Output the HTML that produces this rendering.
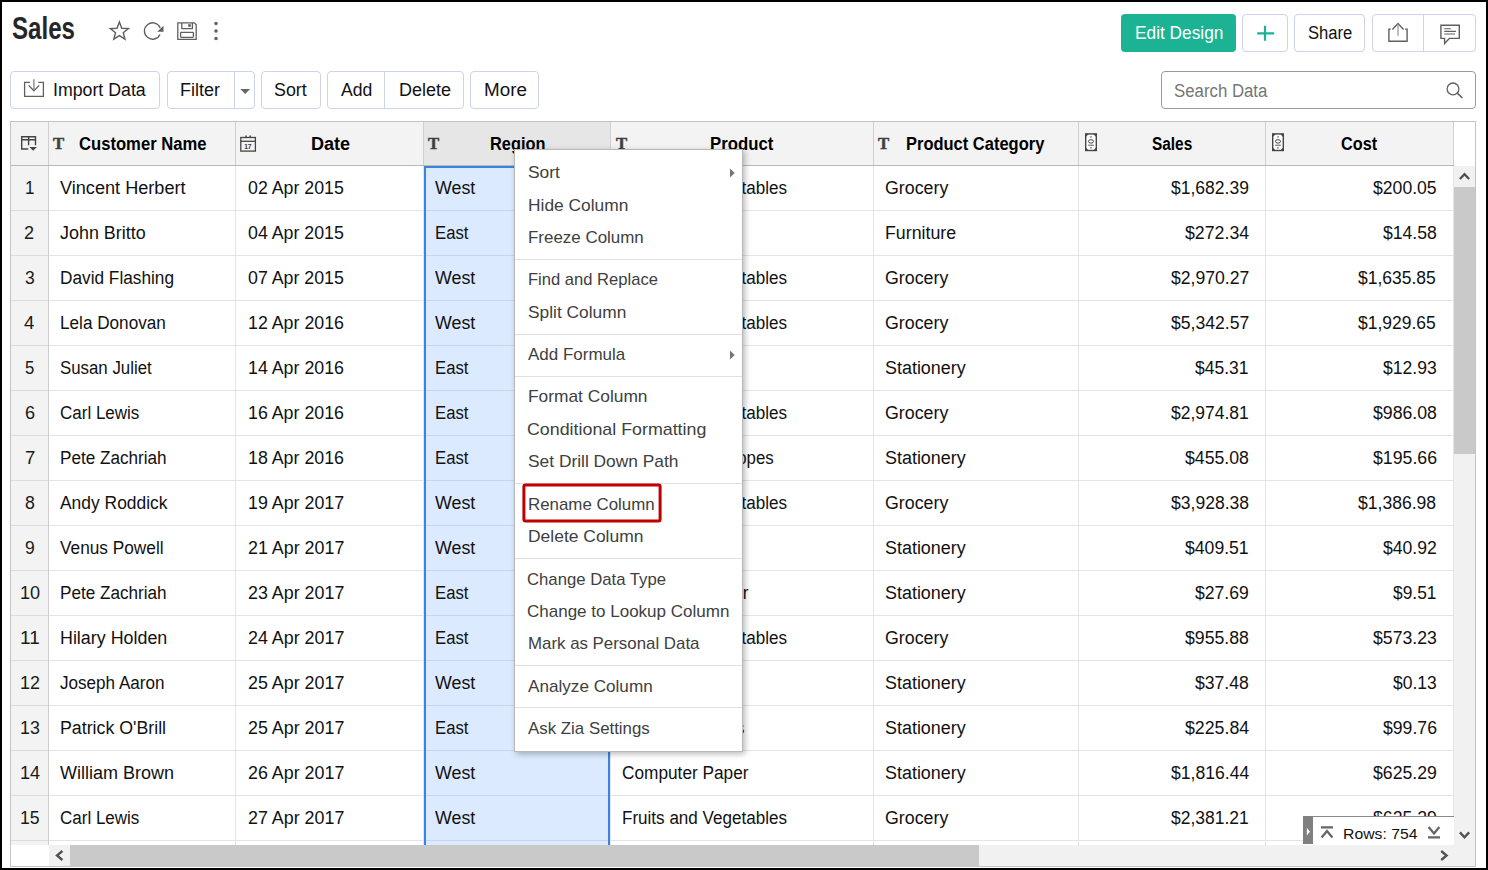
<!DOCTYPE html>
<html lang="en"><head><meta charset="utf-8"><title>Sales</title>
<style>
html,body{margin:0;padding:0;}
body{width:1488px;height:870px;position:relative;overflow:hidden;background:#fff;font-family:"Liberation Sans", sans-serif;}
body div,body svg,body span.t{position:absolute;box-sizing:border-box;}
span.t{white-space:pre;display:block;transform-origin:0 50%;}
svg{overflow:visible;}
.btn{border:1px solid #ccd3ea;border-radius:4px;background:#fff;}
</style></head><body>
<span class="t" style="left:11.87px;top:9.83px;font-size:30.5px;line-height:37px;color:#262626;transform:scaleX(0.7898);font-weight:700;">Sales</span>
<svg style="left:104px;top:14px" width="32" height="32" viewBox="0 0 32 32"><polygon points="15.40,8.00 17.78,14.22 24.44,14.56 19.25,18.75 20.98,25.19 15.40,21.55 9.82,25.19 11.55,18.75 6.36,14.56 13.02,14.22" fill="none" stroke="#5f5f5f" stroke-width="1.4" stroke-linejoin="miter"/></svg>
<svg style="left:138px;top:14px" width="32" height="34" viewBox="0 0 32 34"><path d="M22.20 13.93 A8.2 8.2 0 1 0 22.03 20.47" fill="none" stroke="#5f5f5f" stroke-width="1.3"/><polygon points="25.5,11.8 25.5,17.7 19.19999999999999,17.7" fill="#5f5f5f"/></svg>
<svg style="left:174px;top:18px" width="26" height="26" viewBox="0 0 26 26"><g fill="none" stroke="#5f5f5f" stroke-width="1.3" stroke-linejoin="round"><path d="M3.8 4.9 H20.4 L22.2 6.7 V21.4 H3.8 Z"/><path d="M7.8 4.9 V10.6 H18.4 V4.9"/><rect x="6.6" y="14.4" width="12.8" height="4.9" rx="0.8"/></g><rect x="14.2" y="6.2" width="2.6" height="2.6" fill="#5f5f5f"/></svg>
<svg style="left:210px;top:18px" width="12" height="26" viewBox="0 0 12 26"><g fill="#5f5f5f"><circle cx="6" cy="5.4" r="1.75"/><circle cx="6" cy="13.1" r="1.75"/><circle cx="6" cy="20.4" r="1.75"/></g></svg>
<div style="left:1121px;top:14px;width:115px;height:38px;background:#1bb394;border-radius:4px;"></div>
<span class="t" style="left:1134.91px;top:21.76px;font-size:18px;line-height:22px;color:#fff;transform:scaleX(0.9605);">Edit Design</span>
<div class="btn" style="left:1242px;top:14px;width:46px;height:38px;"></div>
<svg style="left:1242px;top:14px" width="46" height="38" viewBox="0 0 46 38"><path d="M23 11.8V26.8M15.2 19.4H32.2" stroke="#1bb394" stroke-width="2.2" fill="none"/></svg>
<div class="btn" style="left:1294px;top:14px;width:71px;height:38px;"></div>
<span class="t" style="left:1307.81px;top:21.76px;font-size:18px;line-height:22px;color:#111;transform:scaleX(0.9222);">Share</span>
<div class="btn" style="left:1372px;top:14px;width:104px;height:38px;"></div>
<div style="left:1423px;top:15px;width:1px;height:36px;background:#ccd3ea;"></div>
<svg style="left:1380px;top:16px" width="40" height="34" viewBox="0 0 40 34"><g fill="none" stroke="#5f5f5f" stroke-width="1.4"><path d="M10.9 13.1H8.9V25.2H27.1V13.1H25.1"/><path d="M12.4 13.5L18 7.6L23.6 13.5"/></g><path d="M18 8.5V19.8" stroke="#a9a9a9" stroke-width="1.5" fill="none"/></svg>
<svg style="left:1430px;top:16px" width="40" height="34" viewBox="0 0 40 34"><g fill="none" stroke="#5f5f5f" stroke-width="1.4" stroke-linejoin="miter"><path d="M10.9 9.2H29.3V22.4H19.3L14.6 27.4V22.4H10.9Z"/></g><g stroke="#5f5f5f" stroke-width="1.1" fill="none"><path d="M14.2 12.8H20.8M14.2 15.4H25.9M14.2 18H25"/></g></svg>
<div class="btn" style="left:10px;top:71px;width:150px;height:38px;"></div>
<svg style="left:20px;top:74px" width="30" height="30" viewBox="0 0 30 30"><g fill="none" stroke="#5f5f5f" stroke-width="1.3"><path d="M9.9 8.4H4.6V22.4H23.4V8.4H18.3"/><path d="M8.6 11.4L13.9 16.8L19.2 11.4"/></g><path d="M13.9 5.3V16" stroke="#8a8a8a" stroke-width="1.4" fill="none"/></svg>
<span class="t" style="left:53.47px;top:78.86px;font-size:18px;line-height:22px;color:#111;transform:scaleX(0.9857);">Import Data</span>
<div class="btn" style="left:167px;top:71px;width:88px;height:38px;"></div>
<div style="left:234px;top:72px;width:1px;height:36px;background:#ccd3ea;"></div>
<span class="t" style="left:180.15px;top:78.86px;font-size:18px;line-height:22px;color:#111;transform:scaleX(0.9973);">Filter</span>
<svg style="left:238px;top:84px" width="14" height="14" viewBox="0 0 14 14"><polygon points="2.3,5 12.1,5 7.2,9.9" fill="#666"/></svg>
<div class="btn" style="left:261px;top:71px;width:60px;height:38px;"></div>
<span class="t" style="left:274.26px;top:78.86px;font-size:18px;line-height:22px;color:#111;transform:scaleX(0.9903);">Sort</span>
<div class="btn" style="left:327px;top:71px;width:137px;height:38px;"></div>
<div style="left:384px;top:72px;width:1px;height:36px;background:#ccd3ea;"></div>
<span class="t" style="left:340.95px;top:78.86px;font-size:18px;line-height:22px;color:#111;transform:scaleX(0.9768);">Add</span>
<span class="t" style="left:398.85px;top:78.86px;font-size:18px;line-height:22px;color:#111;transform:scaleX(0.9996);">Delete</span>
<div class="btn" style="left:470px;top:71px;width:69px;height:38px;"></div>
<span class="t" style="left:483.59px;top:78.86px;font-size:18px;line-height:22px;color:#111;transform:scaleX(1.0463);">More</span>
<div style="left:1161px;top:71px;width:315px;height:38px;border:1px solid #9a9a9a;border-radius:4px;background:#fff;"></div>
<span class="t" style="left:1174.10px;top:79.86px;font-size:18px;line-height:22px;color:#767676;transform:scaleX(0.9331);">Search Data</span>
<svg style="left:1440px;top:78px" width="28" height="26" viewBox="0 0 28 26"><circle cx="13" cy="10.9" r="5.9" fill="none" stroke="#5f5f5f" stroke-width="1.3"/><path d="M17.3 15.2L22.4 20" stroke="#5f5f5f" stroke-width="1.6" fill="none"/></svg>
<div style="left:10px;top:121px;width:1466px;height:746px;border:1px solid #c4c4c4;background:#fff;"></div>
<div style="left:11px;top:122px;width:1443px;height:43px;background:#f3f3f3;"></div>
<div style="left:424px;top:122px;width:186px;height:43px;background:#e6e6e6;"></div>
<div style="left:11px;top:166px;width:37px;height:679px;background:#f3f3f3;"></div>
<div style="left:11px;top:210px;width:37px;height:1px;background:#dcdcdc;"></div>
<div style="left:49px;top:210px;width:1404px;height:1px;background:#e4e4e4;"></div>
<div style="left:11px;top:255px;width:37px;height:1px;background:#dcdcdc;"></div>
<div style="left:49px;top:255px;width:1404px;height:1px;background:#e4e4e4;"></div>
<div style="left:11px;top:300px;width:37px;height:1px;background:#dcdcdc;"></div>
<div style="left:49px;top:300px;width:1404px;height:1px;background:#e4e4e4;"></div>
<div style="left:11px;top:345px;width:37px;height:1px;background:#dcdcdc;"></div>
<div style="left:49px;top:345px;width:1404px;height:1px;background:#e4e4e4;"></div>
<div style="left:11px;top:390px;width:37px;height:1px;background:#dcdcdc;"></div>
<div style="left:49px;top:390px;width:1404px;height:1px;background:#e4e4e4;"></div>
<div style="left:11px;top:435px;width:37px;height:1px;background:#dcdcdc;"></div>
<div style="left:49px;top:435px;width:1404px;height:1px;background:#e4e4e4;"></div>
<div style="left:11px;top:480px;width:37px;height:1px;background:#dcdcdc;"></div>
<div style="left:49px;top:480px;width:1404px;height:1px;background:#e4e4e4;"></div>
<div style="left:11px;top:525px;width:37px;height:1px;background:#dcdcdc;"></div>
<div style="left:49px;top:525px;width:1404px;height:1px;background:#e4e4e4;"></div>
<div style="left:11px;top:570px;width:37px;height:1px;background:#dcdcdc;"></div>
<div style="left:49px;top:570px;width:1404px;height:1px;background:#e4e4e4;"></div>
<div style="left:11px;top:615px;width:37px;height:1px;background:#dcdcdc;"></div>
<div style="left:49px;top:615px;width:1404px;height:1px;background:#e4e4e4;"></div>
<div style="left:11px;top:660px;width:37px;height:1px;background:#dcdcdc;"></div>
<div style="left:49px;top:660px;width:1404px;height:1px;background:#e4e4e4;"></div>
<div style="left:11px;top:705px;width:37px;height:1px;background:#dcdcdc;"></div>
<div style="left:49px;top:705px;width:1404px;height:1px;background:#e4e4e4;"></div>
<div style="left:11px;top:750px;width:37px;height:1px;background:#dcdcdc;"></div>
<div style="left:49px;top:750px;width:1404px;height:1px;background:#e4e4e4;"></div>
<div style="left:11px;top:795px;width:37px;height:1px;background:#dcdcdc;"></div>
<div style="left:49px;top:795px;width:1404px;height:1px;background:#e4e4e4;"></div>
<div style="left:11px;top:840px;width:37px;height:1px;background:#dcdcdc;"></div>
<div style="left:49px;top:840px;width:1404px;height:1px;background:#e4e4e4;"></div>
<div style="left:235px;top:166px;width:1px;height:679px;background:#e4e4e4;"></div>
<div style="left:423px;top:166px;width:1px;height:679px;background:#e4e4e4;"></div>
<div style="left:610px;top:166px;width:1px;height:679px;background:#e4e4e4;"></div>
<div style="left:873px;top:166px;width:1px;height:679px;background:#e4e4e4;"></div>
<div style="left:1078px;top:166px;width:1px;height:679px;background:#e4e4e4;"></div>
<div style="left:1265px;top:166px;width:1px;height:679px;background:#e4e4e4;"></div>
<div style="left:1453px;top:166px;width:1px;height:679px;background:#e4e4e4;"></div>
<div style="left:48px;top:166px;width:1px;height:679px;background:#cfcfcf;"></div>
<div style="left:48px;top:122px;width:1px;height:43px;background:#cfcfcf;"></div>
<div style="left:235px;top:122px;width:1px;height:43px;background:#cfcfcf;"></div>
<div style="left:423px;top:122px;width:1px;height:43px;background:#cfcfcf;"></div>
<div style="left:610px;top:122px;width:1px;height:43px;background:#cfcfcf;"></div>
<div style="left:873px;top:122px;width:1px;height:43px;background:#cfcfcf;"></div>
<div style="left:1078px;top:122px;width:1px;height:43px;background:#cfcfcf;"></div>
<div style="left:1265px;top:122px;width:1px;height:43px;background:#cfcfcf;"></div>
<div style="left:1453px;top:122px;width:1px;height:43px;background:#cfcfcf;"></div>
<div style="left:11px;top:165px;width:1443px;height:1px;background:#b9b9b9;"></div>
<div style="left:424px;top:166px;width:186px;height:679px;background:#dbeafe;border-left:2px solid #3884e6;border-right:2px solid #3884e6;border-top:2px solid #3884e6;"></div>
<div style="left:426px;top:210px;width:182px;height:1px;background:#c6d6ec;"></div>
<div style="left:426px;top:255px;width:182px;height:1px;background:#c6d6ec;"></div>
<div style="left:426px;top:300px;width:182px;height:1px;background:#c6d6ec;"></div>
<div style="left:426px;top:345px;width:182px;height:1px;background:#c6d6ec;"></div>
<div style="left:426px;top:390px;width:182px;height:1px;background:#c6d6ec;"></div>
<div style="left:426px;top:435px;width:182px;height:1px;background:#c6d6ec;"></div>
<div style="left:426px;top:480px;width:182px;height:1px;background:#c6d6ec;"></div>
<div style="left:426px;top:525px;width:182px;height:1px;background:#c6d6ec;"></div>
<div style="left:426px;top:570px;width:182px;height:1px;background:#c6d6ec;"></div>
<div style="left:426px;top:615px;width:182px;height:1px;background:#c6d6ec;"></div>
<div style="left:426px;top:660px;width:182px;height:1px;background:#c6d6ec;"></div>
<div style="left:426px;top:705px;width:182px;height:1px;background:#c6d6ec;"></div>
<div style="left:426px;top:750px;width:182px;height:1px;background:#c6d6ec;"></div>
<div style="left:426px;top:795px;width:182px;height:1px;background:#c6d6ec;"></div>
<div style="left:426px;top:840px;width:182px;height:1px;background:#c6d6ec;"></div>
<svg style="left:18px;top:132px" width="24" height="24" viewBox="0 0 24 24"><g fill="none" stroke="#444" stroke-width="1.4"><path d="M10.2 17H3.7V4.8H17.5V13.2"/><path d="M3.7 7.8H17.5M10.6 4.8V13.2"/></g><polygon points="11.4,15 18.9,15 15.15,18.8" fill="#444"/></svg>
<span class="t" style="left:53.02px;top:133.70px;font-size:16.6px;line-height:20px;color:#3e3e3e;transform:scaleX(1.0089);font-weight:700;font-family:'Liberation Serif',serif;-webkit-text-stroke:0.45px #3e3e3e;">T</span>
<span class="t" style="left:428.42px;top:133.70px;font-size:16.6px;line-height:20px;color:#3e3e3e;transform:scaleX(1.0089);font-weight:700;font-family:'Liberation Serif',serif;-webkit-text-stroke:0.45px #3e3e3e;">T</span>
<span class="t" style="left:615.62px;top:133.70px;font-size:16.6px;line-height:20px;color:#3e3e3e;transform:scaleX(1.0089);font-weight:700;font-family:'Liberation Serif',serif;-webkit-text-stroke:0.45px #3e3e3e;">T</span>
<span class="t" style="left:878.32px;top:133.70px;font-size:16.6px;line-height:20px;color:#3e3e3e;transform:scaleX(1.0089);font-weight:700;font-family:'Liberation Serif',serif;-webkit-text-stroke:0.45px #3e3e3e;">T</span>
<svg style="left:236px;top:132px" width="24" height="24" viewBox="0 0 24 24"><g fill="none" stroke="#444" stroke-width="1.3"><rect x="4.8" y="5.5" width="14.6" height="13.6"/><path d="M4.8 9.3H19.4"/></g><path d="M10 3.4V5.4M14.2 3.4V5.4" stroke="#444" stroke-width="1.5"/><text x="11.8" y="17.2" style="font-family:Liberation Sans,sans-serif;font-size:6.6px;font-weight:700" fill="#333" text-anchor="middle">17</text></svg>
<svg style="left:1084px;top:131px" width="16" height="22" viewBox="0 0 16 22"><rect x="1.7" y="2.9" width="10.6" height="16.6" fill="#fff" stroke="#444" stroke-width="1.4"/><path d="M1.7 2.9h3.1l-3.1 3.1zM12.3 2.9h-3.1l3.1 3.1zM1.7 19.5h3.1l-3.1-3.1zM12.3 19.5h-3.1l3.1-3.1z" fill="#444"/><ellipse cx="7" cy="10.4" rx="2.6" ry="1.7" fill="none" stroke="#444" stroke-width="1"/><path d="M4.2 14.2H9.8" stroke="#555" stroke-width="1"/><rect x="6.3" y="5.2" width="1.4" height="1.4" fill="#666"/><rect x="6.3" y="16.2" width="1.4" height="1.4" fill="#666"/></svg>
<svg style="left:1271px;top:131px" width="16" height="22" viewBox="0 0 16 22"><rect x="1.7" y="2.9" width="10.6" height="16.6" fill="#fff" stroke="#444" stroke-width="1.4"/><path d="M1.7 2.9h3.1l-3.1 3.1zM12.3 2.9h-3.1l3.1 3.1zM1.7 19.5h3.1l-3.1-3.1zM12.3 19.5h-3.1l3.1-3.1z" fill="#444"/><ellipse cx="7" cy="10.4" rx="2.6" ry="1.7" fill="none" stroke="#444" stroke-width="1"/><path d="M4.2 14.2H9.8" stroke="#555" stroke-width="1"/><rect x="6.3" y="5.2" width="1.4" height="1.4" fill="#666"/><rect x="6.3" y="16.2" width="1.4" height="1.4" fill="#666"/></svg>
<span class="t" style="left:78.50px;top:132.56px;font-size:18px;line-height:22px;color:#000;transform:scaleX(0.9237);font-weight:700;">Customer Name</span>
<span class="t" style="left:310.65px;top:132.56px;font-size:18px;line-height:22px;color:#000;transform:scaleX(1.0026);font-weight:700;">Date</span>
<span class="t" style="left:489.86px;top:132.56px;font-size:18px;line-height:22px;color:#000;transform:scaleX(0.9080);font-weight:700;">Region</span>
<span class="t" style="left:710.13px;top:132.56px;font-size:18px;line-height:22px;color:#000;transform:scaleX(0.9308);font-weight:700;">Product</span>
<span class="t" style="left:906.05px;top:132.56px;font-size:18px;line-height:22px;color:#000;transform:scaleX(0.9158);font-weight:700;">Product Category</span>
<span class="t" style="left:1152.12px;top:132.56px;font-size:18px;line-height:22px;color:#000;transform:scaleX(0.8554);font-weight:700;">Sales</span>
<span class="t" style="left:1341.32px;top:132.56px;font-size:18px;line-height:22px;color:#000;transform:scaleX(0.9027);font-weight:700;">Cost</span>
<span class="t" style="left:24.70px;top:176.61px;font-size:18px;line-height:22px;color:#1a1a1a;transform:scaleX(0.9478);">1</span>
<span class="t" style="left:60.00px;top:176.61px;font-size:18px;line-height:22px;color:#111;transform:scaleX(1.0070);">Vincent Herbert</span>
<span class="t" style="left:247.69px;top:176.61px;font-size:18px;line-height:22px;color:#111;transform:scaleX(0.9873);">02 Apr 2015</span>
<span class="t" style="left:434.90px;top:176.61px;font-size:18px;line-height:22px;color:#111;transform:scaleX(0.9908);">West</span>
<span class="t" style="left:622.07px;top:176.61px;font-size:18px;line-height:22px;color:#111;transform:scaleX(0.9476);">Fruits and Vegetables</span>
<span class="t" style="left:885.11px;top:176.61px;font-size:18px;line-height:22px;color:#111;transform:scaleX(0.9887);">Grocery</span>
<span class="t" style="left:1170.97px;top:176.61px;font-size:18px;line-height:22px;color:#111;transform:scaleX(0.9730);">$1,682.39</span>
<span class="t" style="left:1372.53px;top:176.61px;font-size:18px;line-height:22px;color:#111;transform:scaleX(0.9784);">$200.05</span>
<span class="t" style="left:24.45px;top:221.61px;font-size:18px;line-height:22px;color:#1a1a1a;transform:scaleX(1.0063);">2</span>
<span class="t" style="left:60.00px;top:221.61px;font-size:18px;line-height:22px;color:#111;transform:scaleX(0.9955);">John Britto</span>
<span class="t" style="left:247.69px;top:221.61px;font-size:18px;line-height:22px;color:#111;transform:scaleX(0.9873);">04 Apr 2015</span>
<span class="t" style="left:434.80px;top:221.61px;font-size:18px;line-height:22px;color:#111;transform:scaleX(0.9271);">East</span>
<span class="t" style="left:622.08px;top:221.61px;font-size:18px;line-height:22px;color:#111;transform:scaleX(0.9118);">Bookcases</span>
<span class="t" style="left:884.99px;top:221.61px;font-size:18px;line-height:22px;color:#111;transform:scaleX(0.9872);">Furniture</span>
<span class="t" style="left:1185.03px;top:221.61px;font-size:18px;line-height:22px;color:#111;transform:scaleX(0.9859);">$272.34</span>
<span class="t" style="left:1382.63px;top:221.61px;font-size:18px;line-height:22px;color:#111;transform:scaleX(0.9781);">$14.58</span>
<span class="t" style="left:24.68px;top:266.61px;font-size:18px;line-height:22px;color:#1a1a1a;transform:scaleX(0.9710);">3</span>
<span class="t" style="left:60.24px;top:266.61px;font-size:18px;line-height:22px;color:#111;transform:scaleX(0.9577);">David Flashing</span>
<span class="t" style="left:247.69px;top:266.61px;font-size:18px;line-height:22px;color:#111;transform:scaleX(0.9873);">07 Apr 2015</span>
<span class="t" style="left:434.90px;top:266.61px;font-size:18px;line-height:22px;color:#111;transform:scaleX(0.9908);">West</span>
<span class="t" style="left:622.07px;top:266.61px;font-size:18px;line-height:22px;color:#111;transform:scaleX(0.9476);">Fruits and Vegetables</span>
<span class="t" style="left:885.11px;top:266.61px;font-size:18px;line-height:22px;color:#111;transform:scaleX(0.9887);">Grocery</span>
<span class="t" style="left:1170.97px;top:266.61px;font-size:18px;line-height:22px;color:#111;transform:scaleX(0.9779);">$2,970.27</span>
<span class="t" style="left:1358.47px;top:266.61px;font-size:18px;line-height:22px;color:#111;transform:scaleX(0.9705);">$1,635.85</span>
<span class="t" style="left:24.37px;top:311.61px;font-size:18px;line-height:22px;color:#1a1a1a;transform:scaleX(1.0338);">4</span>
<span class="t" style="left:60.24px;top:311.61px;font-size:18px;line-height:22px;color:#111;transform:scaleX(0.9525);">Lela Donovan</span>
<span class="t" style="left:247.96px;top:311.61px;font-size:18px;line-height:22px;color:#111;transform:scaleX(0.9885);">12 Apr 2016</span>
<span class="t" style="left:434.90px;top:311.61px;font-size:18px;line-height:22px;color:#111;transform:scaleX(0.9908);">West</span>
<span class="t" style="left:622.07px;top:311.61px;font-size:18px;line-height:22px;color:#111;transform:scaleX(0.9476);">Fruits and Vegetables</span>
<span class="t" style="left:885.11px;top:311.61px;font-size:18px;line-height:22px;color:#111;transform:scaleX(0.9887);">Grocery</span>
<span class="t" style="left:1170.97px;top:311.61px;font-size:18px;line-height:22px;color:#111;transform:scaleX(0.9779);">$5,342.57</span>
<span class="t" style="left:1358.47px;top:311.61px;font-size:18px;line-height:22px;color:#111;transform:scaleX(0.9705);">$1,929.65</span>
<span class="t" style="left:24.90px;top:356.61px;font-size:18px;line-height:22px;color:#1a1a1a;transform:scaleX(0.9265);">5</span>
<span class="t" style="left:59.74px;top:356.61px;font-size:18px;line-height:22px;color:#111;transform:scaleX(0.9348);">Susan Juliet</span>
<span class="t" style="left:247.96px;top:356.61px;font-size:18px;line-height:22px;color:#111;transform:scaleX(0.9885);">14 Apr 2016</span>
<span class="t" style="left:434.80px;top:356.61px;font-size:18px;line-height:22px;color:#111;transform:scaleX(0.9271);">East</span>
<span class="t" style="left:622.06px;top:356.61px;font-size:18px;line-height:22px;color:#111;transform:scaleX(0.9202);">Paper</span>
<span class="t" style="left:884.60px;top:356.61px;font-size:18px;line-height:22px;color:#111;transform:scaleX(0.9957);">Stationery</span>
<span class="t" style="left:1195.14px;top:356.61px;font-size:18px;line-height:22px;color:#111;transform:scaleX(0.9727);">$45.31</span>
<span class="t" style="left:1382.64px;top:356.61px;font-size:18px;line-height:22px;color:#111;transform:scaleX(0.9763);">$12.93</span>
<span class="t" style="left:24.55px;top:401.61px;font-size:18px;line-height:22px;color:#1a1a1a;transform:scaleX(1.0057);">6</span>
<span class="t" style="left:59.94px;top:401.61px;font-size:18px;line-height:22px;color:#111;transform:scaleX(0.9446);">Carl Lewis</span>
<span class="t" style="left:247.96px;top:401.61px;font-size:18px;line-height:22px;color:#111;transform:scaleX(0.9885);">16 Apr 2016</span>
<span class="t" style="left:434.80px;top:401.61px;font-size:18px;line-height:22px;color:#111;transform:scaleX(0.9271);">East</span>
<span class="t" style="left:622.07px;top:401.61px;font-size:18px;line-height:22px;color:#111;transform:scaleX(0.9476);">Fruits and Vegetables</span>
<span class="t" style="left:885.11px;top:401.61px;font-size:18px;line-height:22px;color:#111;transform:scaleX(0.9887);">Grocery</span>
<span class="t" style="left:1170.97px;top:401.61px;font-size:18px;line-height:22px;color:#111;transform:scaleX(0.9705);">$2,974.81</span>
<span class="t" style="left:1372.53px;top:401.61px;font-size:18px;line-height:22px;color:#111;transform:scaleX(0.9830);">$986.08</span>
<span class="t" style="left:24.53px;top:446.61px;font-size:18px;line-height:22px;color:#1a1a1a;transform:scaleX(1.0294);">7</span>
<span class="t" style="left:60.24px;top:446.61px;font-size:18px;line-height:22px;color:#111;transform:scaleX(0.9510);">Pete Zachriah</span>
<span class="t" style="left:247.96px;top:446.61px;font-size:18px;line-height:22px;color:#111;transform:scaleX(0.9885);">18 Apr 2016</span>
<span class="t" style="left:434.80px;top:446.61px;font-size:18px;line-height:22px;color:#111;transform:scaleX(0.9271);">East</span>
<span class="t" style="left:621.99px;top:446.61px;font-size:18px;line-height:22px;color:#111;transform:scaleX(0.9363);">Business Envelopes</span>
<span class="t" style="left:884.60px;top:446.61px;font-size:18px;line-height:22px;color:#111;transform:scaleX(0.9957);">Stationery</span>
<span class="t" style="left:1185.03px;top:446.61px;font-size:18px;line-height:22px;color:#111;transform:scaleX(0.9830);">$455.08</span>
<span class="t" style="left:1372.53px;top:446.61px;font-size:18px;line-height:22px;color:#111;transform:scaleX(0.9845);">$195.66</span>
<span class="t" style="left:24.67px;top:491.61px;font-size:18px;line-height:22px;color:#1a1a1a;transform:scaleX(0.9823);">8</span>
<span class="t" style="left:60.00px;top:491.61px;font-size:18px;line-height:22px;color:#111;transform:scaleX(0.9679);">Andy Roddick</span>
<span class="t" style="left:247.96px;top:491.61px;font-size:18px;line-height:22px;color:#111;transform:scaleX(0.9905);">19 Apr 2017</span>
<span class="t" style="left:434.90px;top:491.61px;font-size:18px;line-height:22px;color:#111;transform:scaleX(0.9908);">West</span>
<span class="t" style="left:622.07px;top:491.61px;font-size:18px;line-height:22px;color:#111;transform:scaleX(0.9476);">Fruits and Vegetables</span>
<span class="t" style="left:885.11px;top:491.61px;font-size:18px;line-height:22px;color:#111;transform:scaleX(0.9887);">Grocery</span>
<span class="t" style="left:1170.97px;top:491.61px;font-size:18px;line-height:22px;color:#111;transform:scaleX(0.9742);">$3,928.38</span>
<span class="t" style="left:1358.47px;top:491.61px;font-size:18px;line-height:22px;color:#111;transform:scaleX(0.9742);">$1,386.98</span>
<span class="t" style="left:24.68px;top:536.61px;font-size:18px;line-height:22px;color:#1a1a1a;transform:scaleX(0.9714);">9</span>
<span class="t" style="left:60.00px;top:536.61px;font-size:18px;line-height:22px;color:#111;transform:scaleX(0.9584);">Venus Powell</span>
<span class="t" style="left:247.78px;top:536.61px;font-size:18px;line-height:22px;color:#111;transform:scaleX(0.9924);">21 Apr 2017</span>
<span class="t" style="left:434.90px;top:536.61px;font-size:18px;line-height:22px;color:#111;transform:scaleX(0.9908);">West</span>
<span class="t" style="left:622.12px;top:536.61px;font-size:18px;line-height:22px;color:#111;transform:scaleX(0.8793);">Pens</span>
<span class="t" style="left:884.60px;top:536.61px;font-size:18px;line-height:22px;color:#111;transform:scaleX(0.9957);">Stationery</span>
<span class="t" style="left:1185.03px;top:536.61px;font-size:18px;line-height:22px;color:#111;transform:scaleX(0.9785);">$409.51</span>
<span class="t" style="left:1382.63px;top:536.61px;font-size:18px;line-height:22px;color:#111;transform:scaleX(0.9781);">$40.92</span>
<span class="t" style="left:19.62px;top:581.61px;font-size:18px;line-height:22px;color:#1a1a1a;transform:scaleX(1.0040);">10</span>
<span class="t" style="left:60.24px;top:581.61px;font-size:18px;line-height:22px;color:#111;transform:scaleX(0.9510);">Pete Zachriah</span>
<span class="t" style="left:247.78px;top:581.61px;font-size:18px;line-height:22px;color:#111;transform:scaleX(0.9924);">23 Apr 2017</span>
<span class="t" style="left:434.80px;top:581.61px;font-size:18px;line-height:22px;color:#111;transform:scaleX(0.9271);">East</span>
<span class="t" style="left:622.14px;top:581.61px;font-size:18px;line-height:22px;color:#111;transform:scaleX(0.9582);">Computer Paper</span>
<span class="t" style="left:884.60px;top:581.61px;font-size:18px;line-height:22px;color:#111;transform:scaleX(0.9957);">Stationery</span>
<span class="t" style="left:1195.14px;top:581.61px;font-size:18px;line-height:22px;color:#111;transform:scaleX(0.9763);">$27.69</span>
<span class="t" style="left:1392.74px;top:581.61px;font-size:18px;line-height:22px;color:#111;transform:scaleX(0.9644);">$9.51</span>
<span class="t" style="left:19.55px;top:626.61px;font-size:18px;line-height:22px;color:#1a1a1a;transform:scaleX(1.0564);">11</span>
<span class="t" style="left:60.19px;top:626.61px;font-size:18px;line-height:22px;color:#111;transform:scaleX(0.9927);">Hilary Holden</span>
<span class="t" style="left:247.78px;top:626.61px;font-size:18px;line-height:22px;color:#111;transform:scaleX(0.9924);">24 Apr 2017</span>
<span class="t" style="left:434.80px;top:626.61px;font-size:18px;line-height:22px;color:#111;transform:scaleX(0.9271);">East</span>
<span class="t" style="left:622.07px;top:626.61px;font-size:18px;line-height:22px;color:#111;transform:scaleX(0.9476);">Fruits and Vegetables</span>
<span class="t" style="left:885.11px;top:626.61px;font-size:18px;line-height:22px;color:#111;transform:scaleX(0.9887);">Grocery</span>
<span class="t" style="left:1185.03px;top:626.61px;font-size:18px;line-height:22px;color:#111;transform:scaleX(0.9830);">$955.88</span>
<span class="t" style="left:1372.53px;top:626.61px;font-size:18px;line-height:22px;color:#111;transform:scaleX(0.9815);">$573.23</span>
<span class="t" style="left:19.63px;top:671.61px;font-size:18px;line-height:22px;color:#1a1a1a;transform:scaleX(0.9937);">12</span>
<span class="t" style="left:60.01px;top:671.61px;font-size:18px;line-height:22px;color:#111;transform:scaleX(0.9489);">Joseph Aaron</span>
<span class="t" style="left:247.78px;top:671.61px;font-size:18px;line-height:22px;color:#111;transform:scaleX(0.9924);">25 Apr 2017</span>
<span class="t" style="left:434.90px;top:671.61px;font-size:18px;line-height:22px;color:#111;transform:scaleX(0.9908);">West</span>
<span class="t" style="left:622.06px;top:671.61px;font-size:18px;line-height:22px;color:#111;transform:scaleX(0.9202);">Paper</span>
<span class="t" style="left:884.60px;top:671.61px;font-size:18px;line-height:22px;color:#111;transform:scaleX(0.9957);">Stationery</span>
<span class="t" style="left:1195.13px;top:671.61px;font-size:18px;line-height:22px;color:#111;transform:scaleX(0.9781);">$37.48</span>
<span class="t" style="left:1392.74px;top:671.61px;font-size:18px;line-height:22px;color:#111;transform:scaleX(0.9688);">$0.13</span>
<span class="t" style="left:19.64px;top:716.61px;font-size:18px;line-height:22px;color:#1a1a1a;transform:scaleX(0.9882);">13</span>
<span class="t" style="left:60.19px;top:716.61px;font-size:18px;line-height:22px;color:#111;transform:scaleX(0.9870);">Patrick O&#x27;Brill</span>
<span class="t" style="left:247.78px;top:716.61px;font-size:18px;line-height:22px;color:#111;transform:scaleX(0.9924);">25 Apr 2017</span>
<span class="t" style="left:434.80px;top:716.61px;font-size:18px;line-height:22px;color:#111;transform:scaleX(0.9271);">East</span>
<span class="t" style="left:622.20px;top:716.61px;font-size:18px;line-height:22px;color:#111;transform:scaleX(1.2047);">Writing Pads</span>
<span class="t" style="left:884.60px;top:716.61px;font-size:18px;line-height:22px;color:#111;transform:scaleX(0.9957);">Stationery</span>
<span class="t" style="left:1185.03px;top:716.61px;font-size:18px;line-height:22px;color:#111;transform:scaleX(0.9859);">$225.84</span>
<span class="t" style="left:1382.63px;top:716.61px;font-size:18px;line-height:22px;color:#111;transform:scaleX(0.9798);">$99.76</span>
<span class="t" style="left:19.62px;top:761.61px;font-size:18px;line-height:22px;color:#1a1a1a;transform:scaleX(1.0037);">14</span>
<span class="t" style="left:60.20px;top:761.61px;font-size:18px;line-height:22px;color:#111;transform:scaleX(0.9998);">William Brown</span>
<span class="t" style="left:247.78px;top:761.61px;font-size:18px;line-height:22px;color:#111;transform:scaleX(0.9924);">26 Apr 2017</span>
<span class="t" style="left:434.90px;top:761.61px;font-size:18px;line-height:22px;color:#111;transform:scaleX(0.9908);">West</span>
<span class="t" style="left:622.14px;top:761.61px;font-size:18px;line-height:22px;color:#111;transform:scaleX(0.9582);">Computer Paper</span>
<span class="t" style="left:884.60px;top:761.61px;font-size:18px;line-height:22px;color:#111;transform:scaleX(0.9957);">Stationery</span>
<span class="t" style="left:1170.97px;top:761.61px;font-size:18px;line-height:22px;color:#111;transform:scaleX(0.9766);">$1,816.44</span>
<span class="t" style="left:1372.53px;top:761.61px;font-size:18px;line-height:22px;color:#111;transform:scaleX(0.9815);">$625.29</span>
<span class="t" style="left:19.65px;top:806.61px;font-size:18px;line-height:22px;color:#1a1a1a;transform:scaleX(0.9775);">15</span>
<span class="t" style="left:59.94px;top:806.61px;font-size:18px;line-height:22px;color:#111;transform:scaleX(0.9446);">Carl Lewis</span>
<span class="t" style="left:247.78px;top:806.61px;font-size:18px;line-height:22px;color:#111;transform:scaleX(0.9924);">27 Apr 2017</span>
<span class="t" style="left:434.90px;top:806.61px;font-size:18px;line-height:22px;color:#111;transform:scaleX(0.9908);">West</span>
<span class="t" style="left:622.07px;top:806.61px;font-size:18px;line-height:22px;color:#111;transform:scaleX(0.9476);">Fruits and Vegetables</span>
<span class="t" style="left:885.11px;top:806.61px;font-size:18px;line-height:22px;color:#111;transform:scaleX(0.9887);">Grocery</span>
<span class="t" style="left:1170.97px;top:806.61px;font-size:18px;line-height:22px;color:#111;transform:scaleX(0.9705);">$2,381.21</span>
<span class="t" style="left:1372.53px;top:806.61px;font-size:18px;line-height:22px;color:#111;transform:scaleX(0.9815);">$625.29</span>
<div style="left:1454px;top:166px;width:21px;height:679px;background:#f1f1f1;"></div>
<div style="left:1454px;top:187px;width:21px;height:267px;background:#c9c9c9;"></div>
<svg style="left:1454px;top:166px" width="21" height="21" viewBox="0 0 21 21"><path d="M5.9 13L10.5 8.1L15.1 13" fill="none" stroke="#505050" stroke-width="2.3"/></svg>
<svg style="left:1454px;top:824px" width="21" height="21" viewBox="0 0 21 21"><path d="M5.9 8.4L10.5 13.3L15.1 8.4" fill="none" stroke="#505050" stroke-width="2.3"/></svg>
<div style="left:11px;top:845px;width:38px;height:21px;background:#fff;"></div>
<div style="left:49px;top:845px;width:1426px;height:21px;background:#f1f1f1;"></div>
<div style="left:70px;top:845px;width:909px;height:21px;background:#c9c9c9;"></div>
<svg style="left:49px;top:845px" width="21" height="21" viewBox="0 0 21 21"><path d="M13.4 6L8 10.5L13.4 15" fill="none" stroke="#505050" stroke-width="2.3"/></svg>
<svg style="left:1433px;top:845px" width="21" height="21" viewBox="0 0 21 21"><path d="M8.2 6L13.6 10.5L8.2 15" fill="none" stroke="#505050" stroke-width="2.3"/></svg>
<div style="left:1303px;top:816px;width:151px;height:29px;background:#fff;border-top:1px solid #8a8a8a;"></div>
<div style="left:1303px;top:816px;width:10px;height:28px;background:#808080;"></div>
<svg style="left:1303px;top:816px" width="10" height="28" viewBox="0 0 10 28"><polygon points="3.8,11.8 7,15.7 3.8,19.6" fill="#fff"/></svg>
<svg style="left:1318px;top:822px" width="20" height="20" viewBox="0 0 20 20"><path d="M3 5.4H15M3.6 15.4L9 9L14.4 15.4" fill="none" stroke="#666" stroke-width="2.3"/></svg>
<svg style="left:1425px;top:822px" width="20" height="20" viewBox="0 0 20 20"><path d="M3 15.4H15M3.6 5L9 11.4L14.4 5" fill="none" stroke="#666" stroke-width="2.3"/></svg>
<span class="t" style="left:1342.76px;top:824.71px;font-size:14.7px;line-height:18px;color:#111;transform:scaleX(1.0725);">Rows: 754</span>
<div style="left:514px;top:149px;width:229px;height:603px;background:#fff;border:1px solid #b8b8b8;box-shadow:2px 2px 6px rgba(0,0,0,0.28);"></div>
<div style="left:515px;top:259px;width:227px;height:1px;background:#dfdfdf;"></div>
<div style="left:515px;top:334px;width:227px;height:1px;background:#dfdfdf;"></div>
<div style="left:515px;top:376px;width:227px;height:1px;background:#dfdfdf;"></div>
<div style="left:515px;top:483px;width:227px;height:1px;background:#dfdfdf;"></div>
<div style="left:515px;top:558px;width:227px;height:1px;background:#dfdfdf;"></div>
<div style="left:515px;top:665px;width:227px;height:1px;background:#dfdfdf;"></div>
<div style="left:515px;top:707px;width:227px;height:1px;background:#dfdfdf;"></div>
<span class="t" style="left:527.53px;top:163.01px;font-size:17px;line-height:20px;color:#404040;transform:scaleX(1.0246);">Sort</span>
<span class="t" style="left:527.62px;top:196.11px;font-size:17px;line-height:20px;color:#404040;transform:scaleX(1.0207);">Hide Column</span>
<span class="t" style="left:527.66px;top:228.21px;font-size:17px;line-height:20px;color:#404040;transform:scaleX(0.9960);">Freeze Column</span>
<span class="t" style="left:527.68px;top:269.91px;font-size:17px;line-height:20px;color:#404040;transform:scaleX(0.9749);">Find and Replace</span>
<span class="t" style="left:527.54px;top:303.01px;font-size:17px;line-height:20px;color:#404040;transform:scaleX(1.0199);">Split Column</span>
<span class="t" style="left:527.75px;top:345.31px;font-size:17px;line-height:20px;color:#404040;transform:scaleX(0.9993);">Add Formula</span>
<span class="t" style="left:527.62px;top:387.31px;font-size:17px;line-height:20px;color:#404040;transform:scaleX(1.0202);">Format Column</span>
<span class="t" style="left:527.41px;top:419.91px;font-size:17px;line-height:20px;color:#404040;transform:scaleX(1.0486);">Conditional Formatting</span>
<span class="t" style="left:527.54px;top:451.91px;font-size:17px;line-height:20px;color:#404040;transform:scaleX(1.0211);">Set Drill Down Path</span>
<span class="t" style="left:527.66px;top:494.91px;font-size:17px;line-height:20px;color:#404040;transform:scaleX(0.9928);">Rename Column</span>
<span class="t" style="left:527.62px;top:527.31px;font-size:17px;line-height:20px;color:#404040;transform:scaleX(1.0265);">Delete Column</span>
<span class="t" style="left:527.46px;top:569.61px;font-size:17px;line-height:20px;color:#404040;transform:scaleX(0.9828);">Change Data Type</span>
<span class="t" style="left:527.45px;top:602.11px;font-size:17px;line-height:20px;color:#404040;transform:scaleX(1.0005);">Change to Lookup Column</span>
<span class="t" style="left:527.66px;top:634.21px;font-size:17px;line-height:20px;color:#404040;transform:scaleX(0.9915);">Mark as Personal Data</span>
<span class="t" style="left:527.75px;top:677.41px;font-size:17px;line-height:20px;color:#404040;transform:scaleX(1.0071);">Analyze Column</span>
<span class="t" style="left:527.75px;top:719.21px;font-size:17px;line-height:20px;color:#404040;transform:scaleX(0.9916);">Ask Zia Settings</span>
<svg style="left:726px;top:166px" width="12" height="14" viewBox="0 0 12 14"><polygon points="4,2.5 8.7,7 4,11.5" fill="#777"/></svg>
<svg style="left:726px;top:348px" width="12" height="14" viewBox="0 0 12 14"><polygon points="4,2.5 8.7,7 4,11.5" fill="#777"/></svg>
<svg style="left:515px;top:480px" width="160" height="50" viewBox="0 0 160 50"><rect x="8.9" y="5" width="136.2" height="36.1" rx="1.5" fill="none" stroke="#c00000" stroke-width="3"/></svg>
<div style="left:0px;top:0px;width:1488px;height:870px;border:2px solid #000;z-index:50;"></div>
</body></html>
